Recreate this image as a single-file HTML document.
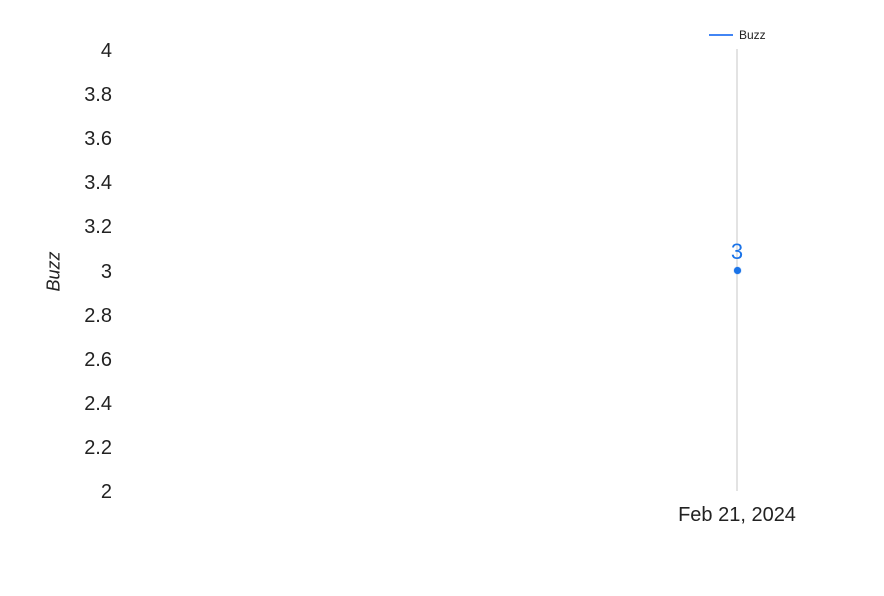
<!DOCTYPE html>
<html><head><style>
body{margin:0;background:#fff;width:884px;height:596px;overflow:hidden;position:relative;font-family:"Liberation Sans",Roboto,sans-serif}
.y{position:absolute;right:772px;font-size:20px;color:#222;line-height:20px}
</style></head><body>
<div class="y" style="top:41px">4</div>
<div class="y" style="top:85px">3.8</div>
<div class="y" style="top:129px">3.6</div>
<div class="y" style="top:173px">3.4</div>
<div class="y" style="top:217px">3.2</div>
<div class="y" style="top:262px">3</div>
<div class="y" style="top:306px">2.8</div>
<div class="y" style="top:350px">2.6</div>
<div class="y" style="top:394px">2.4</div>
<div class="y" style="top:438px">2.2</div>
<div class="y" style="top:482px">2</div>
<div style="position:absolute;left:34px;top:261px;width:40px;text-align:center;transform:rotate(-90deg);font-size:18px;font-style:italic;color:#222">Buzz</div>
<div style="position:absolute;left:736px;top:49px;width:2px;height:442px;background:#e3e3e3"></div>
<div style="position:absolute;left:709px;top:34px;width:24px;height:2px;background:#4285f4"></div>
<div style="position:absolute;left:739px;top:28px;font-size:12px;color:#222">Buzz</div>
<div style="position:absolute;left:725px;top:239px;width:24px;text-align:center;font-size:22px;color:#1a73e8">3</div>
<div style="position:absolute;left:734px;top:267px;width:7px;height:7px;border-radius:50%;background:#1a73e8;box-shadow:0 0 1px #1a73e8"></div>
<div style="position:absolute;left:657px;top:504px;width:160px;text-align:center;font-size:20px;color:#222">Feb 21, 2024</div>
</body></html>
